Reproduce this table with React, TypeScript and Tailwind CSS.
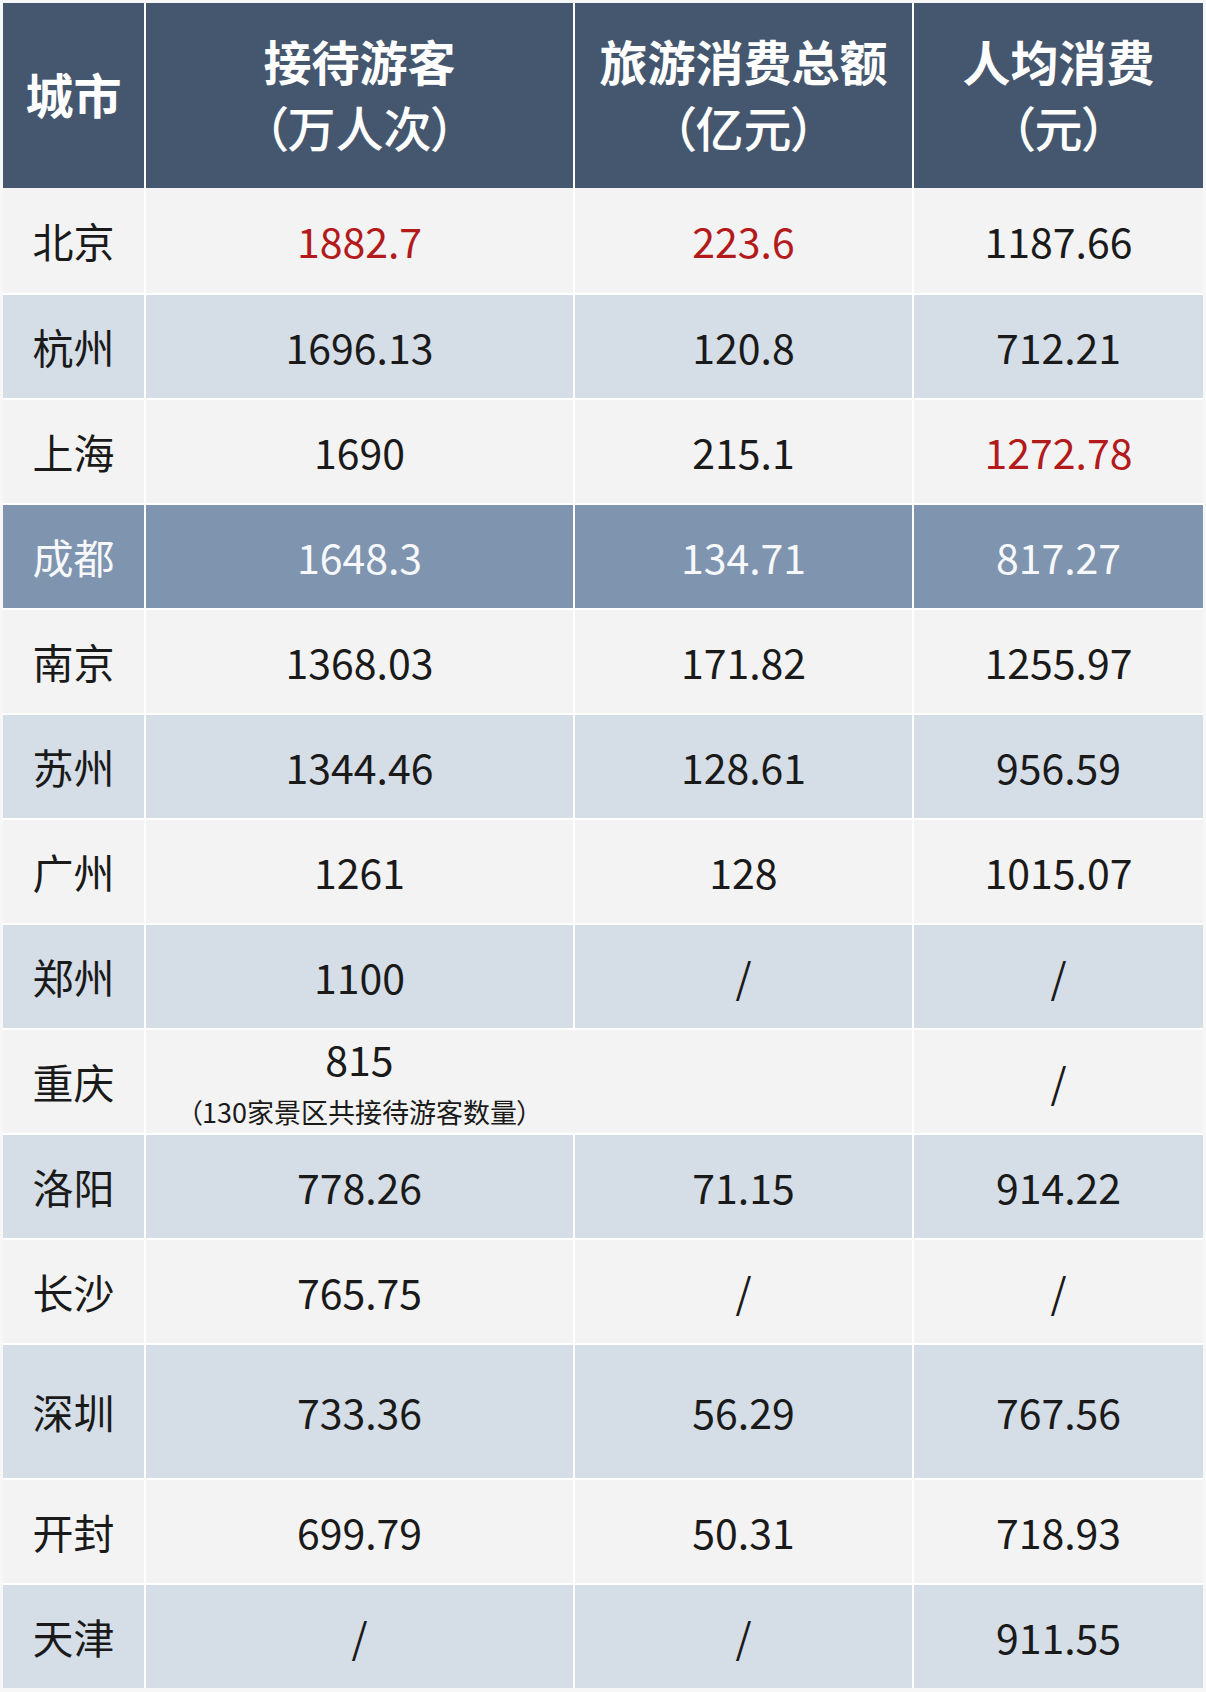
const FONT = "font-['Noto_Sans_CJK_SC','Noto_Sans',sans-serif]";

type Tone = "light" | "blue" | "hl";

type Row = {
  city: string;
  visitors: string;
  total: string;
  perCapita: string;
  tone: Tone;
  red?: ("visitors" | "total" | "perCapita")[];
  note?: string;
  tall?: boolean;
};

const rows: Row[] = [
  { city: "北京", visitors: "1882.7", total: "223.6", perCapita: "1187.66", tone: "light", red: ["visitors", "total"] },
  { city: "杭州", visitors: "1696.13", total: "120.8", perCapita: "712.21", tone: "blue" },
  { city: "上海", visitors: "1690", total: "215.1", perCapita: "1272.78", tone: "light", red: ["perCapita"] },
  { city: "成都", visitors: "1648.3", total: "134.71", perCapita: "817.27", tone: "hl" },
  { city: "南京", visitors: "1368.03", total: "171.82", perCapita: "1255.97", tone: "light" },
  { city: "苏州", visitors: "1344.46", total: "128.61", perCapita: "956.59", tone: "blue" },
  { city: "广州", visitors: "1261", total: "128", perCapita: "1015.07", tone: "light" },
  { city: "郑州", visitors: "1100", total: "/", perCapita: "/", tone: "blue" },
  { city: "重庆", visitors: "815", total: "", perCapita: "/", tone: "light", note: "（130家景区共接待游客数量）" },
  { city: "洛阳", visitors: "778.26", total: "71.15", perCapita: "914.22", tone: "blue" },
  { city: "长沙", visitors: "765.75", total: "/", perCapita: "/", tone: "light" },
  { city: "深圳", visitors: "733.36", total: "56.29", perCapita: "767.56", tone: "blue", tall: true },
  { city: "开封", visitors: "699.79", total: "50.31", perCapita: "718.93", tone: "light" },
  { city: "天津", visitors: "/", total: "/", perCapita: "911.55", tone: "blue" },
];

const toneBg: Record<Tone, string> = {
  light: "bg-[#f3f3f3]",
  blue: "bg-[#d5dde6]",
  hl: "bg-[#7f94ae]",
};

function Cell({ children, tone, red, className = "" }: { children: React.ReactNode; tone: Tone; red?: boolean; className?: string }) {
  const color = tone === "hl" ? "text-[#f6f8fb]" : red ? "text-[#b31a1c]" : "text-[#1a1a1a]";
  return (
    <div className={`flex flex-col items-center justify-center ${toneBg[tone]} ${color} ${className}`}>
      {children}
    </div>
  );
}

function HeaderCell({ top, bottom }: { top: string; bottom?: string }) {
  return (
    <div className="flex flex-col items-center justify-center bg-[#45576e] pb-[6px] text-white text-[48px] leading-[66px]">
      <span className="font-bold">{top}</span>
      {bottom && <span className="font-medium [font-feature-settings:'palt']">{bottom}</span>}
    </div>
  );
}

export default function App() {
  return (
    <div className={`${FONT} min-h-[1692px] w-[1206px] bg-[#f7f7f7] p-[3px]`}>
      <div className="flex w-[1200px] flex-col gap-[2px] bg-white">
        <div className="grid h-[185px] grid-cols-[141px_427px_337px_289px] gap-x-[2px] -mb-[2px]">
          <HeaderCell top="城市" />
          <HeaderCell top="接待游客" bottom="（万人次）" />
          <HeaderCell top="旅游消费总额" bottom="（亿元）" />
          <HeaderCell top="人均消费" bottom="（元）" />
        </div>
        {rows.map((r, i) => {
          const h = r.tall ? "h-[133px]" : i === 0 ? "h-[105px]" : "h-[103px]";
          const isRed = (k: "visitors" | "total" | "perCapita") => r.red?.includes(k);
          return (
            <div
              key={r.city}
              className={`grid grid-cols-[141px_427px_337px_289px] gap-x-[2px] text-[41px] font-normal leading-none ${h}`}
            >
              <Cell tone={r.tone}>{r.city}</Cell>
              <Cell tone={r.tone} red={isRed("visitors")}>
                {r.note ? (
                  <>
                    <span>{r.visitors}</span>
                    <span className="mt-[19px] text-[27px] leading-none [font-feature-settings:'palt']">{r.note}</span>
                  </>
                ) : (
                  r.visitors
                )}
              </Cell>
              <Cell tone={r.tone} red={isRed("total")} className={r.note ? "-ml-[2px]" : ""}>
                {r.total}
              </Cell>
              <Cell tone={r.tone} red={isRed("perCapita")}>
                {r.perCapita}
              </Cell>
            </div>
          );
        })}
      </div>
    </div>
  );
}
